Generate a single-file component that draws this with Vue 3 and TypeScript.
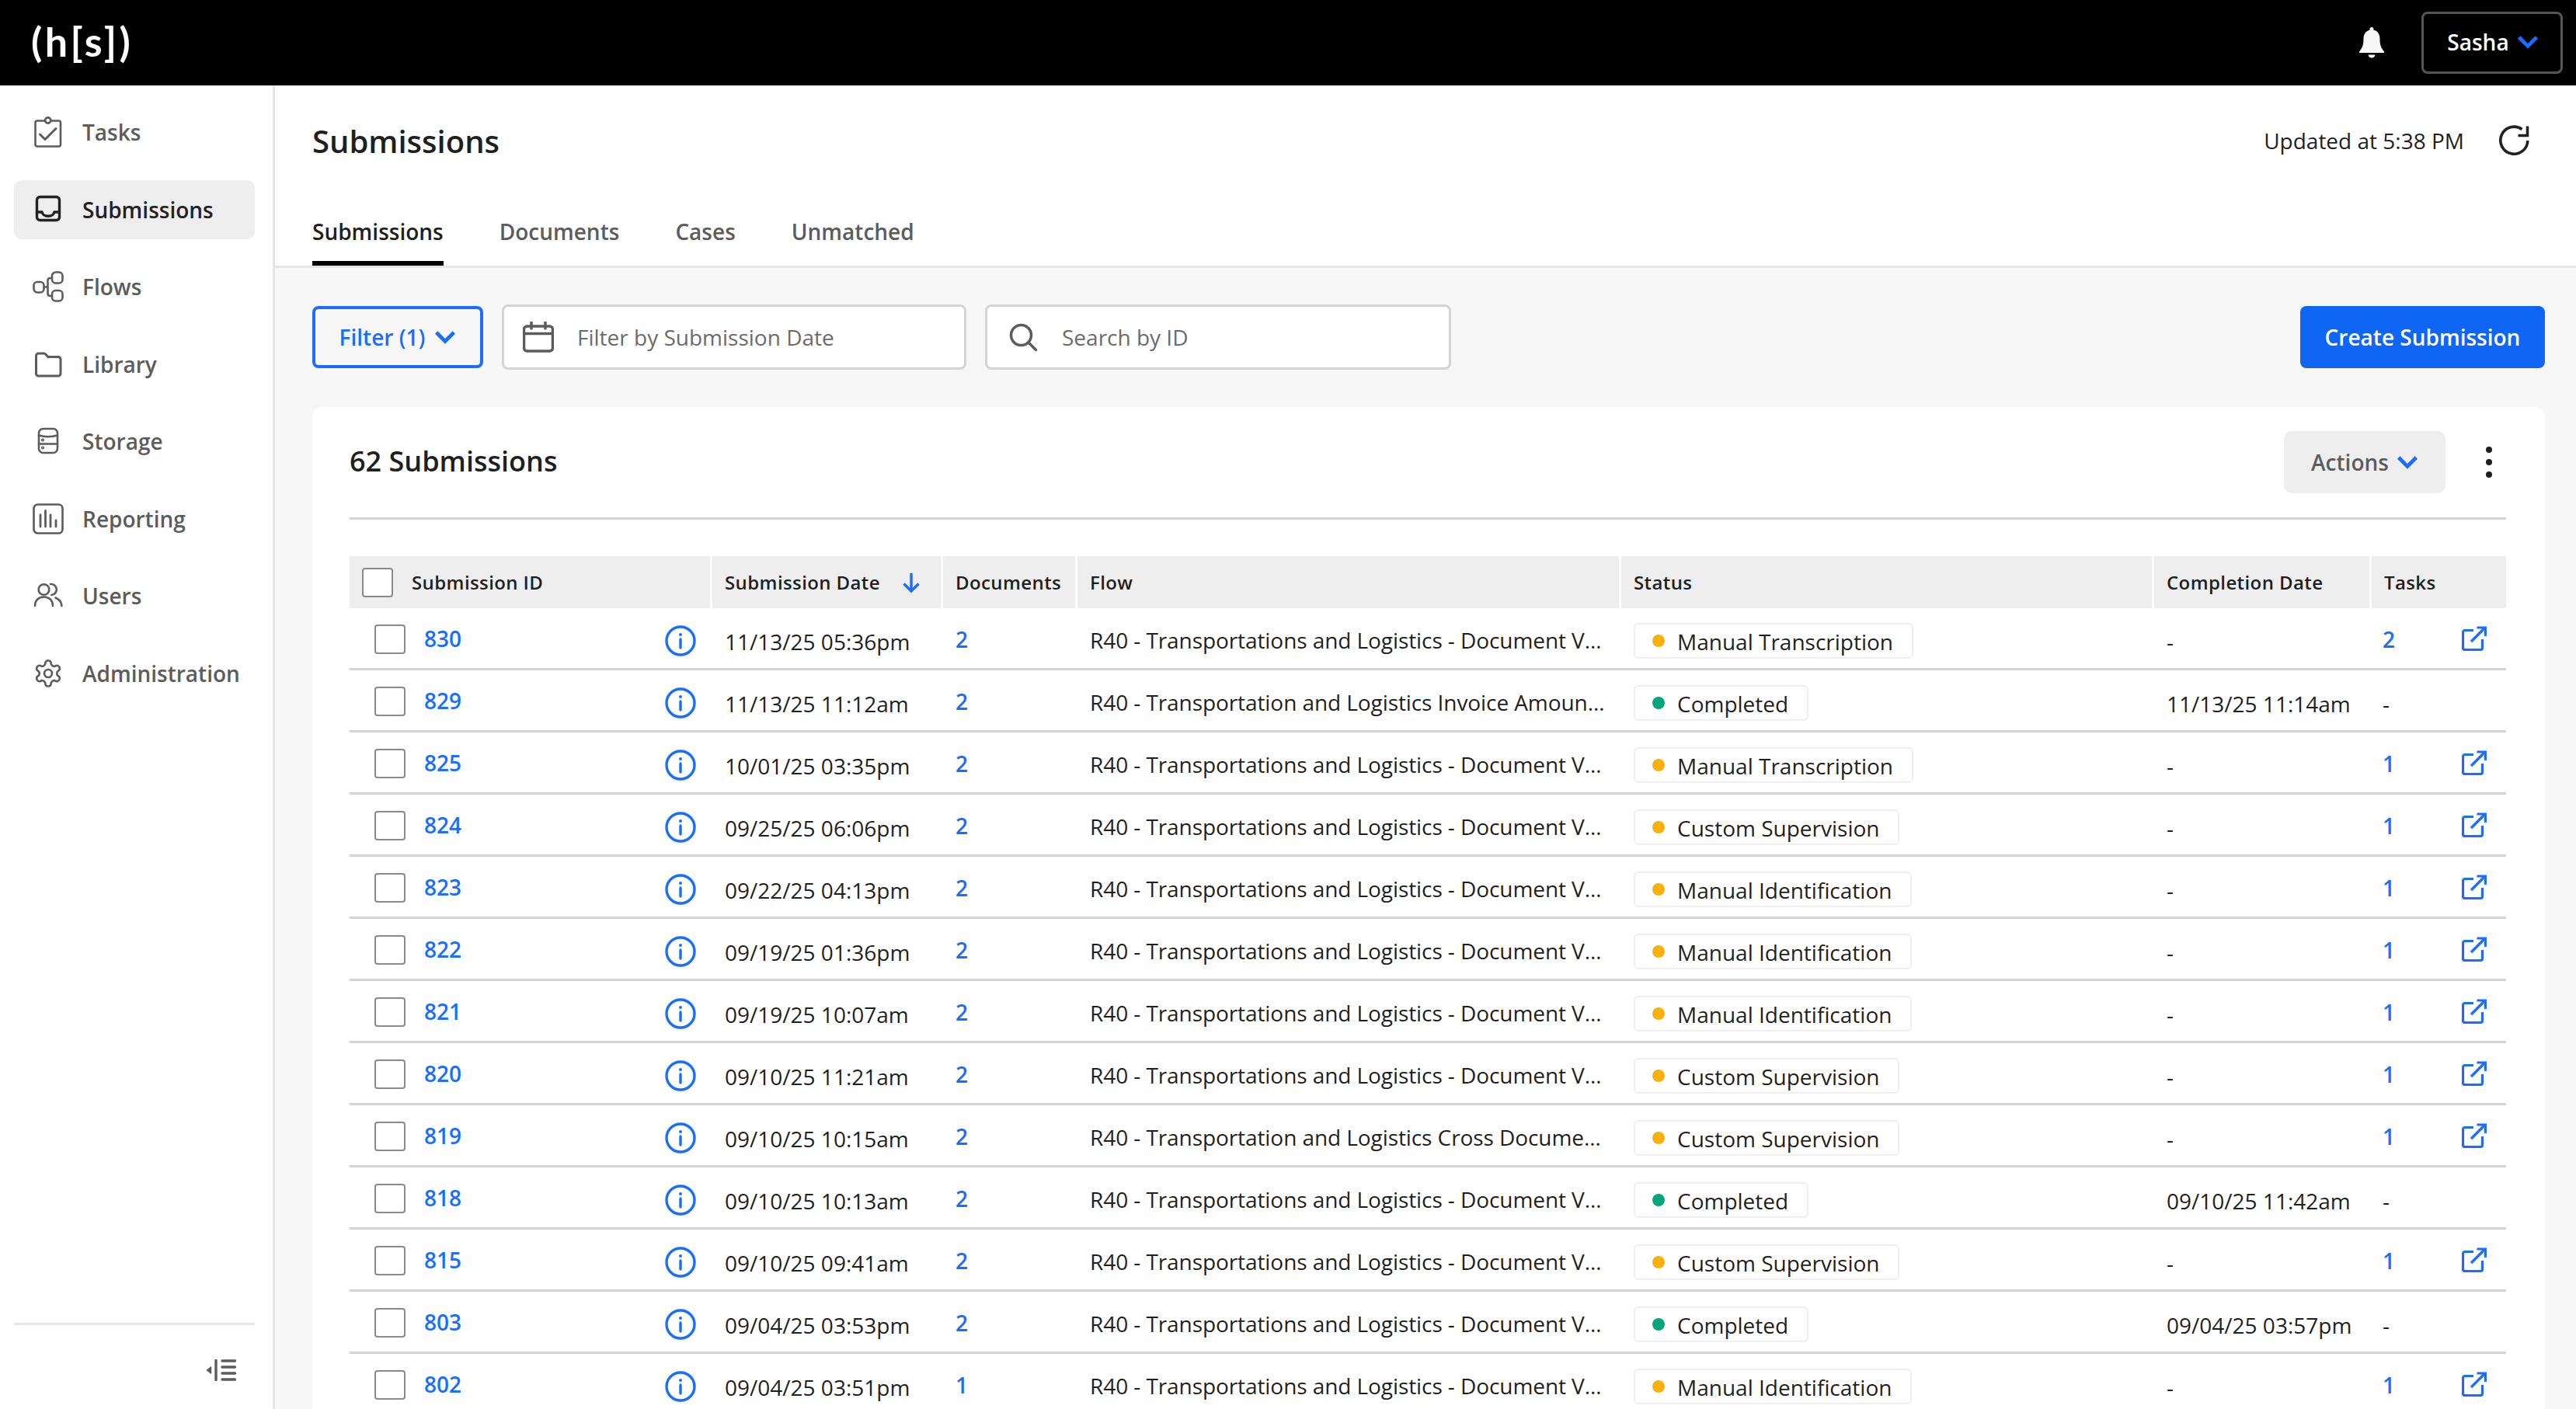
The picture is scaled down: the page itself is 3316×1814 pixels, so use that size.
<script setup lang="ts">
interface NavItem {
  label: string;
  icon: string;
  active?: boolean;
}

interface Row {
  id: number;
  date: string;
  docs: number;
  flow: string;
  status: string;
  done: string;
  tasks: string;
}

const navItems: NavItem[] = [
  {
    label: 'Tasks',
    icon: '<rect x="3.5" y="5.5" width="32.5" height="33" rx="2.5"/><circle cx="19.7" cy="5" r="3.6" fill="#fff"/><path d="M9.5 23l6.5 6.5L30 15.5" stroke-width="3"/>',
  },
  {
    label: 'Submissions',
    active: true,
    icon: '<rect x="5.5" y="3.5" width="29" height="30" rx="4" stroke-width="3.4"/><path d="M5.5 23h6.5c1.2 4 3 5.2 8 5.2s6.800-1.200 8-5.200h6.500" stroke-width="3.400"/>',
  },
  {
    label: 'Flows',
    icon: '<rect x="1.500" y="14" width="13" height="13.500" rx="4.500"/><rect x="25" y="1.500" width="13.500" height="14" rx="4.500"/><rect x="25" y="25" width="13.500" height="13.500" rx="4.500"/><path d="M14.500 20.500h5M25 9h-2.500q-3 0-3 3v17q0 3 3 3h2.500"/>',
  },
  {
    label: 'Library',
    icon: '<path d="M4.500 32V9a3 3 0 0 1 3-3h7a3 3 0 0 1 2.300 1l3 3.500H33a3 3 0 0 1 3 3V32a3 3 0 0 1-3 3H7.500a3 3 0 0 1-3-3z" stroke-width="3"/>',
  },
  {
    label: 'Storage',
    icon: '<rect x="8" y="4" width="24" height="31" rx="5.500"/><path d="M8 12.500q12 3.500 24 0M8 23.500h24"/><circle cx="13" cy="18.500" r=".8"/><circle cx="13" cy="28.500" r=".8"/>',
  },
  {
    label: 'Reporting',
    icon: '<rect x="1.500" y="1.500" width="37" height="37" rx="5"/><path d="M10 15v15M16.500 9.500V30M23 15v15M30 22v8" stroke-width="2.800"/>',
  },
  {
    label: 'Users',
    icon: '<circle cx="14.500" cy="12" r="6.800"/><path d="M3 33c0-7 4.500-11.500 11.500-11.500S26 26 26 33M23 5a7 7 0 0 1 1.500 14M29.500 22.500c4.500 2 7.500 5.500 8 10.500"/>',
  },
  {
    label: 'Administration',
    icon: '<g transform="translate(20 20) scale(1.650) translate(-12 -12)" stroke-width="1.600"><path d="M12.220 2h-.44a2 2 0 0 0-2 2v.18a2 2 0 0 1-1 1.730l-.43.25a2 2 0 0 1-2 0l-.15-.08a2 2 0 0 0-2.730.73l-.22.38a2 2 0 0 0 .73 2.730l.15.1a2 2 0 0 1 1 1.720v.51a2 2 0 0 1-1 1.740l-.15.09a2 2 0 0 0-.73 2.730l.22.38a2 2 0 0 0 2.730.73l.15-.08a2 2 0 0 1 2 0l.43.25a2 2 0 0 1 1 1.730V20a2 2 0 0 0 2 2h.44a2 2 0 0 0 2-2v-.18a2 2 0 0 1 1-1.730l.43-.25a2 2 0 0 1 2 0l.15.08a2 2 0 0 0 2.730-.73l.22-.39a2 2 0 0 0-.73-2.730l-.15-.08a2 2 0 0 1-1-1.740v-.5a2 2 0 0 1 1-1.740l.15-.09a2 2 0 0 0 .73-2.730l-.22-.38a2 2 0 0 0-2.730-.73l-.15.08a2 2 0 0 1-2 0l-.43-.25a2 2 0 0 1-1-1.730V4a2 2 0 0 0-2-2z"/><circle cx="12" cy="12" r="3"/></g>',
  },
];

const tabs = ['Submissions', 'Documents', 'Cases', 'Unmatched'];

const docV = 'R40 - Transportations and Logistics - Document V…';

const rows: Row[] = [
  { id: 830, date: '11/13/25 05:36pm', docs: 2, flow: docV, status: 'Manual Transcription', done: '-', tasks: '2' },
  { id: 829, date: '11/13/25 11:12am', docs: 2, flow: 'R40 - Transportation and Logistics Invoice Amoun…', status: 'Completed', done: '11/13/25 11:14am', tasks: '-' },
  { id: 825, date: '10/01/25 03:35pm', docs: 2, flow: docV, status: 'Manual Transcription', done: '-', tasks: '1' },
  { id: 824, date: '09/25/25 06:06pm', docs: 2, flow: docV, status: 'Custom Supervision', done: '-', tasks: '1' },
  { id: 823, date: '09/22/25 04:13pm', docs: 2, flow: docV, status: 'Manual Identification', done: '-', tasks: '1' },
  { id: 822, date: '09/19/25 01:36pm', docs: 2, flow: docV, status: 'Manual Identification', done: '-', tasks: '1' },
  { id: 821, date: '09/19/25 10:07am', docs: 2, flow: docV, status: 'Manual Identification', done: '-', tasks: '1' },
  { id: 820, date: '09/10/25 11:21am', docs: 2, flow: docV, status: 'Custom Supervision', done: '-', tasks: '1' },
  { id: 819, date: '09/10/25 10:15am', docs: 2, flow: 'R40 - Transportation and Logistics Cross Docume…', status: 'Custom Supervision', done: '-', tasks: '1' },
  { id: 818, date: '09/10/25 10:13am', docs: 2, flow: docV, status: 'Completed', done: '09/10/25 11:42am', tasks: '-' },
  { id: 815, date: '09/10/25 09:41am', docs: 2, flow: docV, status: 'Custom Supervision', done: '-', tasks: '1' },
  { id: 803, date: '09/04/25 03:53pm', docs: 2, flow: docV, status: 'Completed', done: '09/04/25 03:57pm', tasks: '-' },
  { id: 802, date: '09/04/25 03:51pm', docs: 1, flow: docV, status: 'Manual Identification', done: '-', tasks: '1' },
];
</script>

<template>
  <div class="page">
    <header class="topbar">
      <div class="logo">(h[s])</div>
      <svg class="bell" viewBox="0 0 32 40" fill="#f7f7f7">
        <path d="M16 0c-1.600 0-2.500 1-2.500 2.600v1C8 5 5.500 9.500 5.500 15c0 7-1 11-5.500 16.500V33h32v-1.500C27.500 26 26.500 22 26.500 15c0-5.500-2.500-10-8-11.400v-1C18.500 1 17.600 0 16 0z" />
        <path d="M11.500 35.500h9c-.5 2.500-2.200 4-4.500 4s-4-1.500-4.500-4z" />
      </svg>
      <button class="user">
        Sasha
        <svg class="chev" viewBox="0 0 26 16"><path d="M2.500 2.500L13 13 23.500 2.500" /></svg>
      </button>
    </header>

    <div class="body">
      <aside class="sidebar">
        <nav class="nav">
          <a v-for="item in navItems" :key="item.label" class="nav-item" :class="{ active: item.active }">
            <svg class="nav-icon" viewBox="0 0 40 40" v-html="item.icon" />
            <span>{{ item.label }}</span>
          </a>
        </nav>
        <div class="side-foot">
          <svg class="collapse" viewBox="0 0 40 28">
            <path d="M7.500 10L2.500 14l5 4z" fill="#5c5c5c" stroke="#5c5c5c" stroke-width="1.500" stroke-linejoin="round" />
            <path d="M14 1.500v25" stroke-width="3.400" />
            <path d="M22 2h16.500M22 10h16.500M22 18h16.500M22 26h16.500" stroke-width="3.400" />
          </svg>
        </div>
      </aside>

      <main class="main">
        <section class="head">
          <div class="head-row">
            <h1>Submissions</h1>
            <div class="updated">
              <span>Updated at 5:38 PM</span>
              <svg class="refresh" viewBox="0 0 40 40">
                <path d="M30.500 5.500A17.500 17.500 0 1 0 37.800 20" />
                <path d="M37.500 1.500v12h-12" />
              </svg>
            </div>
          </div>
          <div class="tabs">
            <a v-for="(tab, i) in tabs" :key="tab" class="tab" :class="{ on: i === 0 }">{{ tab }}</a>
          </div>
        </section>

        <section class="content">
          <div class="toolbar">
            <button class="filter">
              Filter (1)
              <svg class="chev" viewBox="0 0 26 16"><path d="M2.500 2.500L13 13 23.500 2.500" /></svg>
            </button>
            <div class="field">
              <svg class="field-icon" viewBox="0 0 40 40">
                <rect x="1.500" y="6" width="37" height="32" rx="4" />
                <path d="M1.500 15.500h37M11 1v8M29 1v8" />
              </svg>
              <span>Filter by Submission Date</span>
            </div>
            <div class="field search">
              <svg class="field-icon" viewBox="0 0 40 40">
                <circle cx="17.500" cy="17.500" r="13" />
                <path d="M27 27l9.500 9.500" />
              </svg>
              <span>Search by ID</span>
            </div>
            <button class="create">Create Submission</button>
          </div>

          <div class="card">
            <div class="card-head">
              <h2>62 Submissions</h2>
              <button class="actions">
                Actions
                <svg class="chev" viewBox="0 0 26 16"><path d="M2.500 2.500L13 13 23.500 2.500" /></svg>
              </button>
              <div class="kebab"><i /><i /><i /></div>
            </div>

            <div class="table">
              <div class="thead grid">
                <div class="th th-id"><span class="box" />Submission ID</div>
                <div class="th th-date">
                  Submission Date
                  <svg class="sort" viewBox="0 0 24 26"><path d="M12 1v23M2.500 14.500L12 24l9.500-9.500" /></svg>
                </div>
                <div class="th">Documents</div>
                <div class="th">Flow</div>
                <div class="th">Status</div>
                <div class="th">Completion Date</div>
                <div class="th">Tasks</div>
              </div>

              <div v-for="row in rows" :key="row.id" class="tr grid">
                <div class="td td-id">
                  <span class="box" />
                  <a class="link id">{{ row.id }}</a>
                  <svg class="info" viewBox="0 0 40 40">
                    <circle cx="20" cy="20" r="18" />
                    <path d="M20 18v11" />
                    <circle class="dot-i" cx="20" cy="12" r="2" />
                  </svg>
                </div>
                <div class="td">{{ row.date }}</div>
                <div class="td"><a class="link num">{{ row.docs }}</a></div>
                <div class="td td-flow">{{ row.flow }}</div>
                <div class="td">
                  <span class="pill">
                    <i class="dot" :class="{ green: row.status === 'Completed' }" />{{ row.status }}
                  </span>
                </div>
                <div class="td">{{ row.done }}</div>
                <div class="td td-tasks">
                  <a v-if="row.tasks !== '-'" class="link num">{{ row.tasks }}</a>
                  <span v-else>-</span>
                  <svg v-if="row.tasks !== '-'" class="ext" viewBox="0 0 32 32">
                    <path d="M15 5.500H4a2.500 2.500 0 0 0-2.500 2.500v20A2.500 2.500 0 0 0 4 30.500h20a2.500 2.500 0 0 0 2.500-2.500V17" />
                    <path d="M12 20L30 2M19.500 2H30.500V13" />
                  </svg>
                </div>
              </div>
            </div>
          </div>
        </section>
      </main>
    </div>
  </div>
</template>

<style>
html,
body {
  margin: 0;
  background: #fff;
}
</style>

<style scoped>
.page {
  width: 3316px;
  height: 1814px;
  overflow: hidden;
  display: flex;
  flex-direction: column;
  font-family: 'Open Sans', 'Noto Sans', sans-serif;
  font-size: 28px;
  color: #1f1f1f;
}

button {
  font-family: inherit;
  font-size: 28px;
  font-weight: 600;
}

.chev {
  width: 28px;
  height: 18px;
  fill: none;
  stroke: #1a6dff;
  stroke-width: 4.500;
}

/* top bar */
.topbar {
  height: 110px;
  flex: none;
  background: #000;
  display: flex;
  align-items: center;
  padding: 0 17px 0 40px;
}

.logo {
  font-family: Lato, sans-serif;
  font-size: 52px;
  font-weight: 700;
  letter-spacing: 3.500px;
  color: #fff;
  margin: 0 auto 4px 0;
}

.bell {
  width: 32px;
  height: 40px;
  margin-right: 48px;
}

.user {
  width: 182px;
  height: 80px;
  box-sizing: border-box;
  display: flex;
  align-items: center;
  justify-content: center;
  gap: 10px;
  background: #000;
  color: #fff;
  border: 3px solid #555;
  border-radius: 8px;
  padding: 0 0 3px 2px;
}

/* sidebar */
.body {
  flex: 1;
  display: flex;
  min-height: 0;
}

.sidebar {
  width: 354px;
  flex: none;
  box-sizing: border-box;
  border-right: 3px solid #e5e5e5;
  padding: 22px 0 0 18px;
  display: flex;
  flex-direction: column;
}

.nav {
  display: flex;
  flex-direction: column;
  gap: 23.500px;
  flex: 1;
}

.nav-item {
  width: 310px;
  height: 76px;
  box-sizing: border-box;
  display: flex;
  align-items: center;
  gap: 24px;
  padding-left: 24px;
  border-radius: 10px;
  font-weight: 600;
  color: #5c5c5c;
}

.nav-item.active {
  background: #eee;
  color: #222;
}

.nav-icon {
  width: 40px;
  height: 40px;
  flex: none;
  fill: none;
  stroke: currentColor;
  stroke-width: 2.600;
  stroke-linecap: round;
  stroke-linejoin: round;
}

.side-foot {
  width: 310px;
  height: 111px;
  flex: none;
  box-sizing: border-box;
  border-top: 3px solid #e5e5e5;
  padding: 44px 24px 0 0;
  display: flex;
  justify-content: flex-end;
}

.collapse {
  width: 40px;
  height: 28px;
  fill: none;
  stroke: #5c5c5c;
  stroke-linecap: round;
}

/* header */
.main {
  flex: 1;
  min-width: 0;
  display: flex;
  flex-direction: column;
  background: #f7f7f7;
}

.head {
  height: 235px;
  flex: none;
  box-sizing: border-box;
  background: #fff;
  border-bottom: 3px solid #e5e5e5;
  padding: 0 60px 0 48px;
  display: flex;
  flex-direction: column;
}

.head-row {
  height: 145px;
  box-sizing: border-box;
  padding-bottom: 3px;
  display: flex;
  align-items: center;
  justify-content: space-between;
}

h1 {
  margin: 0;
  font-size: 40px;
  font-weight: 600;
}

.updated {
  display: flex;
  align-items: center;
  gap: 44px;
}

.refresh {
  width: 40px;
  height: 40px;
  fill: none;
  stroke: #222;
  stroke-width: 3.600;
}

.tabs {
  display: flex;
  gap: 72px;
  height: 87px;
}

.tab {
  font-weight: 600;
  color: #5c5c5c;
  height: 87px;
  box-sizing: border-box;
  padding-top: 24px;
}

.tab.on {
  color: #1f1f1f;
  border-bottom: 6px solid #000;
}

/* toolbar */
.content {
  padding: 47px 40px 0 48px;
}

.toolbar {
  display: flex;
  align-items: center;
  gap: 24px;
  height: 84px;
}

.filter {
  width: 220px;
  height: 80px;
  box-sizing: border-box;
  display: flex;
  align-items: center;
  justify-content: center;
  gap: 12px;
  background: #f7f7f7;
  color: #1a6dff;
  border: 4px solid #1a6dff;
  border-radius: 8px;
  padding: 0;
}

.field {
  width: 598px;
  height: 84px;
  box-sizing: border-box;
  background: #fff;
  border: 3px solid #d4d4d4;
  border-radius: 8px;
  display: flex;
  align-items: center;
  gap: 30px;
  padding-left: 24px;
  color: #6b6b6b;
}

.field.search {
  width: 600px;
  padding-left: 26px;
}

.field-icon {
  width: 40px;
  height: 40px;
  flex: none;
  fill: none;
  stroke: #5c5c5c;
  stroke-width: 3.500;
  stroke-linecap: round;
}

.create {
  margin-left: auto;
  width: 315px;
  height: 80px;
  background: #0f66f5;
  color: #fff;
  border: none;
  border-radius: 8px;
  padding: 0;
}

/* card */
.card {
  margin-top: 48px;
  background: #fff;
  border-radius: 12px;
  padding: 0 50px 0 48px;
}

.card-head {
  height: 145px;
  box-sizing: border-box;
  border-bottom: 3px solid #d4d4d4;
  display: flex;
  align-items: center;
}

h2 {
  margin: 0 auto 4px 0;
  font-size: 36px;
  font-weight: 600;
}

.actions {
  width: 208px;
  height: 80px;
  display: flex;
  align-items: center;
  justify-content: center;
  gap: 10px;
  background: #eee;
  color: #5c5c5c;
  border: none;
  border-radius: 10px;
  padding: 0;
}

.kebab {
  width: 8px;
  margin: 0 18px 0 52px;
  display: flex;
  flex-direction: column;
  gap: 8px;
}

.kebab i {
  width: 8px;
  height: 8px;
  border-radius: 50%;
  background: #1f1f1f;
}

/* table */
.table {
  margin-top: 47px;
}

.grid {
  display: grid;
  grid-template-columns: 467px 297px 173px 700px 686px 280px 173px;
}

.thead {
  height: 67px;
}

.th {
  background: #eee;
  margin-right: 3px;
  display: flex;
  align-items: center;
  padding-left: 16px;
  font-size: 24px;
  font-weight: 600;
  letter-spacing: .4px;
}

.th:last-child {
  margin-right: 0;
}

.th-id {
  padding-left: 16px;
  gap: 24px;
}

.th-date {
  justify-content: space-between;
  padding-right: 26px;
}

.sort {
  width: 24px;
  height: 26px;
  fill: none;
  stroke: #1a6dff;
  stroke-width: 3.400;
}

.box {
  width: 40px;
  height: 38px;
  flex: none;
  box-sizing: border-box;
  background: #fff;
  border: 2px solid #8a8a8a;
  border-radius: 4px;
}

.tr {
  height: 80px;
  box-sizing: border-box;
  border-bottom: 3px solid #d4d4d4;
  width: 2776px;
}

.td {
  display: flex;
  align-items: center;
  padding: 8px 0 0 16px;
  white-space: nowrap;
}

.td-flow {
  padding-top: 4px;
  letter-spacing: -.08px;
}

.td-id {
  padding: 2px 21px 0 32px;
  gap: 24px;
}

.link {
  color: #1a6dff;
  font-weight: 600;
}

.id {
  margin-bottom: 2px;
}

.num {
  margin-bottom: 6px;
}

.info {
  width: 40px;
  height: 40px;
  margin-left: auto;
  margin-top: 4px;
  fill: none;
  stroke: #1a6dff;
  stroke-width: 3.400;
  stroke-linecap: round;
}

.dot-i {
  fill: #1a6dff;
  stroke: none;
}

.pill {
  height: 46px;
  box-sizing: border-box;
  display: inline-flex;
  align-items: center;
  gap: 16px;
  padding: 2px 24px 0 22px;
  margin-bottom: 2px;
  border: 2px solid #eee;
  border-radius: 6px;
  font-size: 28px;
}

.dot {
  width: 16px;
  height: 16px;
  margin-top: -2px;
  border-radius: 50%;
  background: #fcb00c;
}

.dot.green {
  background: #03a57f;
}

.td-tasks {
  justify-content: space-between;
  padding-left: 14px;
  padding-right: 25px;
}

.td-tasks .num {
  margin-bottom: 6px;
}

.ext {
  width: 32px;
  height: 32px;
  margin-bottom: 8px;
  fill: none;
  stroke: #1a6dff;
  stroke-width: 3.200;
}
</style>
